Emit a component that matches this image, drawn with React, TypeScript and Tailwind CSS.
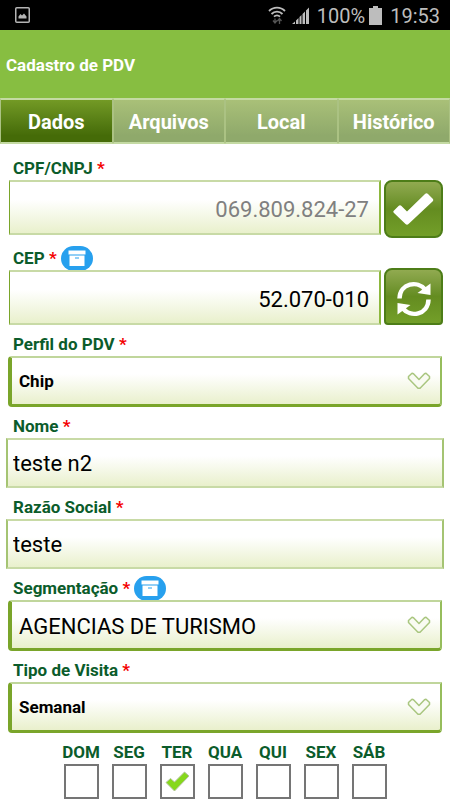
import { useState, type ReactNode } from 'react';
import { clsx } from 'clsx';

const TABS = ['Dados', 'Arquivos', 'Local', 'Histórico'];
const DAYS = ['DOM', 'SEG', 'TER', 'QUA', 'QUI', 'SEX', 'SÁB'];

const FIELD_BG = 'bg-linear-to-b from-white from-35% to-[#e9f0cc]';

const ACTION_BUTTON =
    'flex w-[59px] shrink-0 items-center justify-center border-2 border-[#4d7d18] bg-linear-to-b from-[#91aa50] via-[#648c20] via-50% to-[#739f29]';

function StatusBar() {
    return (
        <div className="flex h-[30px] items-center justify-between bg-black pr-[10px] pl-[15px] text-[20px] text-[#bdbdbd]">
            <svg width="15" height="16" viewBox="0 0 15 16" fill="none">
                <rect x="0.75" y="0.75" width="13.5" height="14.5" rx="1" stroke="#b4b4b4" strokeWidth="1.5" />
                <path d="M3.5 11.5V9.5L5.5 7L7 8.5L9 6.5L11.5 9.5V11.5Z" fill="#b4b4b4" />
            </svg>
            <div className="flex items-center pt-px">
                <svg width="18" height="19" viewBox="0 0 18 19" fill="none" stroke="#bdbdbd" strokeWidth="1.8">
                    <path d="M1 5C5.5 0.4 12.5 0.4 17 5" />
                    <path d="M3.5 8C6.5 4.9 11.5 4.9 14.5 8" />
                    <path d="M6 10.7C7.7 9 10.3 9 12 10.7" />
                    <path d="M5 14.5L7 17L9 14.5M7 12.5V17M9.5 15L11.5 12.5L13.5 15M11.5 12.5V18" stroke="#555" strokeWidth="1.3" />
                </svg>
                <svg className="ml-[6px]" width="17" height="18" viewBox="0 0 17 18" fill="#bdbdbd">
                    <path d="M0 17L3 14.5V17ZM4 13.5L6.5 11V17H4ZM7.5 10L9.5 8V17H7.5ZM10.5 7L13 4.5V17H10.5ZM14 3.5L17 0.5V17H14Z" />
                </svg>
                <span className="ml-2">100%</span>
                <svg className="ml-1" width="13" height="19" viewBox="0 0 13 19" fill="#bdbdbd">
                    <path d="M4 0H9V2H13V19H0V2H4Z" />
                </svg>
                <span className="ml-2">19:53</span>
            </div>
        </div>
    );
}

function ArchiveBadge({ label }: { label: string }) {
    return (
        <button type="button" aria-label={label} className="ml-1 flex h-[25px] w-8 items-center justify-center rounded-full bg-[#27a0ee]">
            <svg width="18" height="17" viewBox="0 0 18 17">
                <path d="M0.5 0.5H17.5V4.5H0.5Z" fill="#fff" />
                <path d="M1.5 5.5H16.5V16H1.5Z" fill="#fff" />
                <path d="M7 8H11" stroke="#27a0ee" />
            </svg>
        </button>
    );
}

interface FieldLabelProps {
    htmlFor: string;
    children: ReactNode;
    badge?: string;
}

function FieldLabel({ htmlFor, children, badge }: FieldLabelProps) {
    return (
        <div className="flex h-6 items-center pl-[13px]">
            <label htmlFor={htmlFor} className="pt-[2px] text-[17px] font-bold text-[#0b5c2b]">
                {children} <span className="text-[#f40000]">*</span>
            </label>
            {badge && <ArchiveBadge label={badge} />}
        </div>
    );
}

interface TextFieldProps {
    id: string;
    label: string;
    value: string;
}

function TextField({ id, label, value }: TextFieldProps) {
    return (
        <div>
            <FieldLabel htmlFor={id}>{label}</FieldLabel>
            <div className="px-[6px]">
                <input
                    id={id}
                    type="text"
                    defaultValue={value}
                    className={clsx(
                        'block h-[50px] w-full border-2 border-[#c8daa6] border-x-[#a5c473] px-[5px] pt-px text-[22px] text-black outline-none',
                        FIELD_BG
                    )}
                />
            </div>
        </div>
    );
}

interface ActionFieldProps extends TextFieldProps {
    badge?: string;
    muted?: boolean;
    className?: string;
    action: ReactNode;
}

function ActionField({ id, label, value, badge, muted, className, action }: ActionFieldProps) {
    return (
        <div>
            <FieldLabel htmlFor={id} badge={badge}>{label}</FieldLabel>
            <div className={clsx('flex h-[55px] gap-[3px] pr-[7px] pl-[9px]', className)}>
                <input
                    id={id}
                    type="text"
                    defaultValue={value}
                    className={clsx(
                        'h-[55px] min-w-0 flex-1 border-y-2 border-r-2 border-l border-[#c8daa6] border-r-[#8db83e] border-l-[#7aa52a] px-[10px] pt-[3px] text-right text-[22px] outline-none',
                        muted ? 'text-[#808080]' : 'text-black',
                        FIELD_BG
                    )}
                />
                {action}
            </div>
        </div>
    );
}

interface SelectFieldProps extends TextFieldProps {
    badge?: string;
    large?: boolean;
}

function SelectField({ id, label, value, badge, large }: SelectFieldProps) {
    return (
        <div>
            <FieldLabel htmlFor={id} badge={badge}>{label}</FieldLabel>
            <div className="relative px-2">
                <select
                    id={id}
                    defaultValue={value}
                    className={clsx(
                        'block h-[51px] w-full appearance-none rounded-sm rounded-tr-none border-t-2 border-r-2 border-b-3 border-l-4 border-[#7aa52a] border-t-[#c0d69c] border-r-[#96bd5c] pt-[2px] pl-[7px] text-black outline-none',
                        large ? 'text-[22px]' : 'text-[17px] font-bold',
                        FIELD_BG
                    )}
                >
                    <option>{value}</option>
                </select>
                <svg className="pointer-events-none absolute top-4 right-[19px]" width="24" height="18" viewBox="0 0 24 18" fill="none">
                    <path
                        d="M1.5 4.5L5 1.2L6.5 1.8L12 7.5L17.5 1.8L19 1.2L22.5 4.5V6.5L13 16.2H11L1.5 6.5Z"
                        fill="#f9fbf2"
                        stroke="#a9c67f"
                        strokeWidth="1.5"
                        strokeLinejoin="round"
                    />
                </svg>
            </div>
        </div>
    );
}

function WeekDays() {
    const [checked, setChecked] = useState<string[]>(['TER']);

    const toggle = (day: string) => {
        setChecked((prev) => (prev.includes(day) ? prev.filter((d) => d !== day) : [...prev, day]));
    };

    return (
        <div className="flex justify-center">
            {DAYS.map((day) => (
                <label key={day} className="flex w-12 flex-col items-center text-[17px] leading-6 font-bold text-[#0b5c2b]">
                    {day}
                    <span className="grid size-[35px] place-items-center">
                        <input
                            type="checkbox"
                            checked={checked.includes(day)}
                            onChange={() => toggle(day)}
                            className="col-start-1 row-start-1 size-[35px] appearance-none border-2 border-[#757575] bg-white"
                        />
                        {checked.includes(day) && (
                            <svg className="pointer-events-none col-start-1 row-start-1" width="25" height="21" viewBox="0 0 25 21">
                                <path
                                    d="M1 11.5L5.5 7.5L9.5 11L19.5 1L24 5L9.5 20Z"
                                    fill="#86d81c"
                                    stroke="#b5c49e"
                                    strokeLinejoin="round"
                                />
                            </svg>
                        )}
                    </span>
                </label>
            ))}
        </div>
    );
}

export default function App() {
    const [active, setActive] = useState('Dados');

    return (
        <div className="min-h-screen bg-white font-[Roboto,sans-serif]">
            <StatusBar />
            <header className="flex h-[68px] items-center bg-[#87be41] px-[6px]">
                <h1 className="pt-[3px] text-[17px] font-bold text-white">Cadastro de PDV</h1>
            </header>
            <nav className="grid h-[46px] grid-cols-4">
                {TABS.map((tab) => (
                    <button
                        key={tab}
                        type="button"
                        onClick={() => setActive(tab)}
                        className={clsx(
                            'border-x border-y-2 border-[#c4daa3] border-x-[#abc283] pt-[2px] text-[20px] font-bold text-white',
                            active === tab
                                ? 'bg-linear-to-b from-[#739a25] to-[#456b08] to-85%'
                                : 'bg-linear-to-b from-[#a9c078] to-[#8fa96b] to-85%'
                        )}
                    >
                        {tab}
                    </button>
                ))}
            </nav>
            <form className="flex flex-col gap-[7px] pt-3">
                <div className="flex flex-col gap-[11px]">
                    <ActionField
                        id="cpf"
                        label="CPF/CNPJ"
                        value="069.809.824-27"
                        muted
                        className="items-start"
                        action={
                            <button type="button" aria-label="Validar" className={clsx('h-[58px] rounded-lg', ACTION_BUTTON)}>
                                <svg width="43" height="34" viewBox="0 0 43 34">
                                    <path
                                        d="M2 18.5L6.5 14C7.5 13 8.5 13 9.5 14L15 19.5L33 2C34 1 35 1 36 2L40.5 6.5C41.5 7.5 41.5 8.5 40.5 9.5L16.5 32C15.5 33 14.5 33 13.5 32L2 21C1 20 1 19.5 2 18.5Z"
                                        fill="#fff"
                                    />
                                </svg>
                            </button>
                        }
                    />
                    <ActionField
                        id="cep"
                        label="CEP"
                        value="52.070-010"
                        badge="Itens do CEP"
                        className="items-end"
                        action={
                            <button type="button" aria-label="Atualizar" className={clsx('h-[57px] rounded-t-lg rounded-b-sm pt-1', ACTION_BUTTON)}>
                                <svg width="36" height="36" viewBox="0 0 36 36">
                                    <path d="M3.5 17.5C4 1.5 22 -0.5 29 8.5" fill="none" stroke="#fff" strokeWidth="4.5" />
                                    <path d="M34.5 2.5V14L21.5 12Z" fill="#fff" />
                                    <path d="M32.5 18.5C32 34.5 14 36.5 7 27.5" fill="none" stroke="#fff" strokeWidth="4.5" />
                                    <path d="M1.5 33.5V22L14.5 24Z" fill="#fff" />
                                </svg>
                            </button>
                        }
                    />
                </div>
                <SelectField id="perfil" label="Perfil do PDV" value="Chip" />
                <TextField id="nome" label="Nome" value="teste n2" />
                <TextField id="razao" label="Razão Social" value="teste" />
                <SelectField id="segmentacao" label="Segmentação" value="AGENCIAS DE TURISMO" badge="Itens da segmentação" large />
                <SelectField id="visita" label="Tipo de Visita" value="Semanal" />
                <WeekDays />
            </form>
        </div>
    );
}
